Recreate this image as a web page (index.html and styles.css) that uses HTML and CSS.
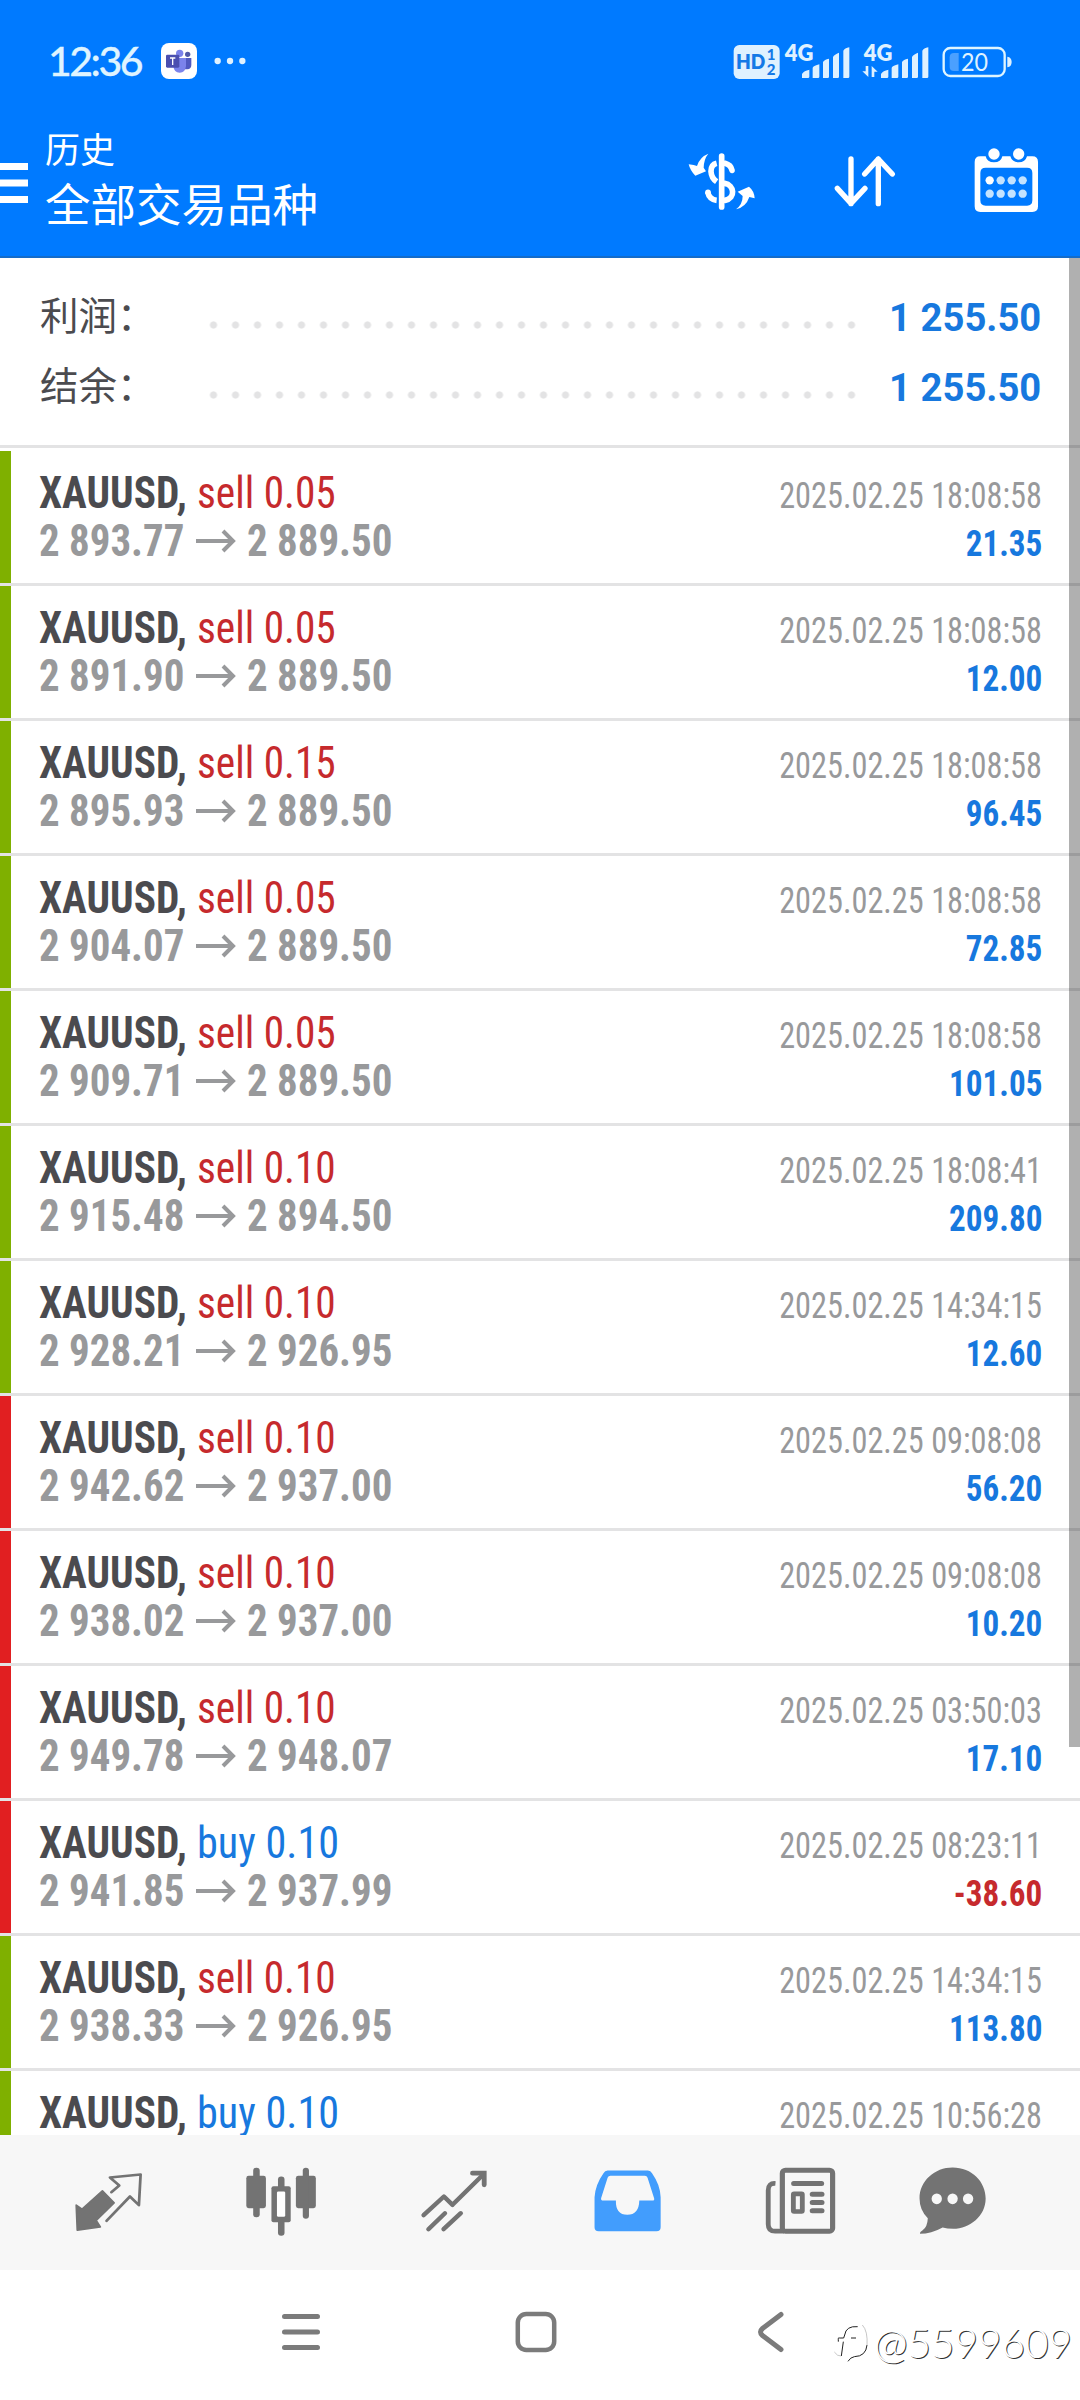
FILE: index.html
```html
<!DOCTYPE html>
<html lang="zh-CN">
<head>
<meta charset="utf-8">
<title>历史</title>
<link rel="stylesheet" href="styles.css">
</head>
<body>
<div class="screen">
  <header class="header">
    <div class="status">
      <span class="clock">12:36</span>
      <svg class="teams" viewBox="483 129 108 108" width="36" height="36">
        <rect x="483" y="129" width="108" height="108" rx="24" fill="#fff"/>
        <circle cx="563" cy="163" r="8" fill="#5059a8"/>
        <path d="M550 174h24v20q0 13-12 14h-12z" fill="#5059c0"/>
        <circle cx="539" cy="160" r="11" fill="#7b83eb"/>
        <path d="M520 174h38v24q-2 20-19 20t-19-20z" fill="#7b83eb"/>
        <rect x="498" y="164" width="40" height="39" rx="4" fill="#4b4fb0"/>
        <path d="M510 174h16M518 174v21" stroke="#fff" stroke-width="4"/>
      </svg>
      <svg class="more" viewBox="643 171 98 24" width="32.7" height="8">
        <g fill="#e0f2ff"><circle cx="654" cy="183" r="9.5"/><circle cx="691" cy="183" r="9.5"/><circle cx="728" cy="183" r="9.5"/></g>
      </svg>
      <svg class="signals" viewBox="220 120 840 120" width="280" height="40">
        <g fill="#dff1ff">
          <rect x="222" y="132" width="138" height="102" rx="17"/>
          <g class="bars">
            <path id="bars" d="M427 231v-12q6-10 22-13v21q0 4-4 4zM459 231v-31q4-6 20-10v37q0 4-4 4zM490 231v-48q4-7 18-10v54q0 4-4 4zM520 231v-63q4-8 18-13v72q0 4-4 4zM551 231v-82q4-7 18-10v88q0 4-4 4z"/>
            <use href="#bars" x="237"/>
          </g>
          <path d="M618 195h8v33l-18-17h10zM636 228v-33l18 17h-10v16z"/>
          <path d="M1043 167q13 2 13 16t-13 16z"/>
        </g>
        <rect x="852" y="141" width="183" height="84" rx="20" fill="none" stroke="#dff5ff" stroke-width="7"/>
        <path d="M897 156v54h-14q-13 0-13-13v-28q0-13 13-13z" fill="#4ba0ff"/>
        <text class="st-hd" x="229" y="204" textLength="88" lengthAdjust="spacingAndGlyphs">HD</text>
        <text class="st-num" x="321" y="178">1</text>
        <text class="st-num" x="321" y="221">2</text>
        <text class="st-net" x="375" y="179" textLength="86" lengthAdjust="spacingAndGlyphs">4G</text>
        <text class="st-net" x="612" y="179" textLength="86" lengthAdjust="spacingAndGlyphs">4G</text>
        <text class="st-bat" x="904" y="209" textLength="81" lengthAdjust="spacingAndGlyphs">20</text>
      </svg>
    </div>
    <div class="appbar">
      <svg class="burger" viewBox="0 0 28 42" width="28" height="42">
        <path d="M0 4.500h28M0 21h28M0 37.500h28" stroke="#fff" stroke-width="7"/>
      </svg>
      <div class="titles">
        <div class="title-small">历史</div>
        <div class="title-main">全部交易品种</div>
      </div>
      <svg class="act-money" viewBox="85 440 210 200" width="70" height="66.7">
        <path d="M146 460Q133 475 132 502L139 513 107 526Q92 512 87 492L102 494 112 497Q120 470 146 460z" fill="#fff"/>
        <path d="M229 627Q249 612 249 587L234 574 268 559Q284 572 285 594L269 590Q259 620 229 627z" fill="#fff"/>
        <path d="M186 467v153" stroke="#fff" stroke-width="17" stroke-linecap="round"/>
        <path d="M196 489Q214 494 217 510M195 549C224 553 229 594 196 600" fill="none" stroke="#fff" stroke-width="17" stroke-linecap="round"/>
        <path d="M171 489Q154 493 154 513Q155 533 171 544M144 575Q149 598 171 600" fill="none" stroke="#fff" stroke-width="17"/>
        <circle cx="145" cy="576" r="8.500" fill="#fff"/>
      </svg>
      <svg class="act-sort" viewBox="520 440 190 200" width="63.3" height="66.7">
        <path d="M574 476V610M533 564L574 609 616 564M656 610V476M615 521L656 476 698 521" fill="none" stroke="#fff" stroke-width="16" stroke-linecap="round" stroke-linejoin="round"/>
      </svg>
      <svg class="act-cal" viewBox="940 440 200 200" width="66.7" height="66.7">
        <path fill="#fff" fill-rule="evenodd" d="M962 468H978Q982 486 1003 486T1028 468H1052Q1057 486 1077 486T1102 468H1118Q1135 468 1135 485V618Q1135 635 1118 635H962Q945 635 945 618V485Q945 468 962 468zM978 502Q962 502 962 518V600Q962 616 978 616H1102Q1118 616 1118 600V518Q1118 502 1102 502z"/>
        <circle cx="1003" cy="461" r="17" fill="#fff"/><circle cx="1077" cy="461" r="17" fill="#fff"/>
        <circle cx="990" cy="540" r="12.500" fill="#fff"/>
        <g fill="#c4e3ff"><circle cx="1023" cy="540" r="12.500"/><circle cx="1056" cy="540" r="12.500"/><circle cx="1089" cy="540" r="12.500"/><circle cx="990" cy="580" r="12.500"/><circle cx="1023" cy="580" r="12.500"/><circle cx="1056" cy="580" r="12.500"/><circle cx="1089" cy="580" r="12.500"/></g>
      </svg>
    </div>
  </header>

  <main class="content">
    <section class="summary">
      <div class="sum-row"><span class="sum-label">利润：</span><span class="dots"></span><span class="sum-value">1 255.50</span></div>
      <div class="sum-row"><span class="sum-label">结余：</span><span class="dots"></span><span class="sum-value">1 255.50</span></div>
    </section>
    <ul class="deals">
      <li class="deal win first"><div class="line"><span class="symbol">XAUUSD,</span><span class="sell">sell 0.05</span><time class="time">2025.02.25 18:08:58</time></div><div class="line"><span class="price">2 893.77</span><svg class="arrow" viewBox="0 0 40 22"><path d="M0 11h36M27 1l10 10-10 10"/></svg><span class="price">2 889.50</span><span class="profit">21.35</span></div></li>
      <li class="deal win"><div class="line"><span class="symbol">XAUUSD,</span><span class="sell">sell 0.05</span><time class="time">2025.02.25 18:08:58</time></div><div class="line"><span class="price">2 891.90</span><svg class="arrow" viewBox="0 0 40 22"><path d="M0 11h36M27 1l10 10-10 10"/></svg><span class="price">2 889.50</span><span class="profit">12.00</span></div></li>
      <li class="deal win"><div class="line"><span class="symbol">XAUUSD,</span><span class="sell">sell 0.15</span><time class="time">2025.02.25 18:08:58</time></div><div class="line"><span class="price">2 895.93</span><svg class="arrow" viewBox="0 0 40 22"><path d="M0 11h36M27 1l10 10-10 10"/></svg><span class="price">2 889.50</span><span class="profit">96.45</span></div></li>
      <li class="deal win"><div class="line"><span class="symbol">XAUUSD,</span><span class="sell">sell 0.05</span><time class="time">2025.02.25 18:08:58</time></div><div class="line"><span class="price">2 904.07</span><svg class="arrow" viewBox="0 0 40 22"><path d="M0 11h36M27 1l10 10-10 10"/></svg><span class="price">2 889.50</span><span class="profit">72.85</span></div></li>
      <li class="deal win"><div class="line"><span class="symbol">XAUUSD,</span><span class="sell">sell 0.05</span><time class="time">2025.02.25 18:08:58</time></div><div class="line"><span class="price">2 909.71</span><svg class="arrow" viewBox="0 0 40 22"><path d="M0 11h36M27 1l10 10-10 10"/></svg><span class="price">2 889.50</span><span class="profit">101.05</span></div></li>
      <li class="deal win"><div class="line"><span class="symbol">XAUUSD,</span><span class="sell">sell 0.10</span><time class="time">2025.02.25 18:08:41</time></div><div class="line"><span class="price">2 915.48</span><svg class="arrow" viewBox="0 0 40 22"><path d="M0 11h36M27 1l10 10-10 10"/></svg><span class="price">2 894.50</span><span class="profit">209.80</span></div></li>
      <li class="deal win"><div class="line"><span class="symbol">XAUUSD,</span><span class="sell">sell 0.10</span><time class="time">2025.02.25 14:34:15</time></div><div class="line"><span class="price">2 928.21</span><svg class="arrow" viewBox="0 0 40 22"><path d="M0 11h36M27 1l10 10-10 10"/></svg><span class="price">2 926.95</span><span class="profit">12.60</span></div></li>
      <li class="deal loss"><div class="line"><span class="symbol">XAUUSD,</span><span class="sell">sell 0.10</span><time class="time">2025.02.25 09:08:08</time></div><div class="line"><span class="price">2 942.62</span><svg class="arrow" viewBox="0 0 40 22"><path d="M0 11h36M27 1l10 10-10 10"/></svg><span class="price">2 937.00</span><span class="profit">56.20</span></div></li>
      <li class="deal loss"><div class="line"><span class="symbol">XAUUSD,</span><span class="sell">sell 0.10</span><time class="time">2025.02.25 09:08:08</time></div><div class="line"><span class="price">2 938.02</span><svg class="arrow" viewBox="0 0 40 22"><path d="M0 11h36M27 1l10 10-10 10"/></svg><span class="price">2 937.00</span><span class="profit">10.20</span></div></li>
      <li class="deal loss"><div class="line"><span class="symbol">XAUUSD,</span><span class="sell">sell 0.10</span><time class="time">2025.02.25 03:50:03</time></div><div class="line"><span class="price">2 949.78</span><svg class="arrow" viewBox="0 0 40 22"><path d="M0 11h36M27 1l10 10-10 10"/></svg><span class="price">2 948.07</span><span class="profit">17.10</span></div></li>
      <li class="deal loss"><div class="line"><span class="symbol">XAUUSD,</span><span class="buy">buy 0.10</span><time class="time">2025.02.25 08:23:11</time></div><div class="line"><span class="price">2 941.85</span><svg class="arrow" viewBox="0 0 40 22"><path d="M0 11h36M27 1l10 10-10 10"/></svg><span class="price">2 937.99</span><span class="profit negative">-38.60</span></div></li>
      <li class="deal win"><div class="line"><span class="symbol">XAUUSD,</span><span class="sell">sell 0.10</span><time class="time">2025.02.25 14:34:15</time></div><div class="line"><span class="price">2 938.33</span><svg class="arrow" viewBox="0 0 40 22"><path d="M0 11h36M27 1l10 10-10 10"/></svg><span class="price">2 926.95</span><span class="profit">113.80</span></div></li>
      <li class="deal win"><div class="line"><span class="symbol">XAUUSD,</span><span class="buy">buy 0.10</span><time class="time">2025.02.25 10:56:28</time></div></li>
    </ul>
    <div class="scrollbar"></div>
  </main>

  <nav class="tabs">
    <svg class="tab" viewBox="200 312.5 230 230" preserveAspectRatio="none">
      <path d="M297 393L331 429 279 482 291 501 224 511 221 436 238 448z" fill="#737373" stroke="#737373" stroke-width="5" stroke-linejoin="round"/>
      <path d="M323 397L346 377 319 353 408 344 403 436 377 410 309 483" fill="none" stroke="#737373" stroke-width="8" stroke-linejoin="round" stroke-linecap="round"/>
    </svg>
    <svg class="tab" viewBox="702.5 312.5 230 230" preserveAspectRatio="none">
      <g fill="#737373"><rect x="715" y="348" width="57" height="97" rx="7"/><rect x="735" y="324" width="19" height="148" rx="9"/><rect x="859" y="348" width="58" height="97" rx="7"/><rect x="879" y="324" width="18" height="153" rx="9"/><rect x="807" y="350" width="19" height="178" rx="9"/><rect x="788" y="379" width="56" height="108" rx="6"/></g>
      <rect x="804" y="395" width="24" height="76" rx="4" fill="#fff"/>
    </svg>
    <svg class="tab" viewBox="1205 312.5 230 230" preserveAspectRatio="none">
      <path d="M1230 466L1289 410 1314 435 1404 343M1244 508L1292 460M1288 508L1338 460" fill="none" stroke="#737373" stroke-width="13" stroke-linecap="round" stroke-linejoin="round"/>
      <path d="M1372 340H1406V375" fill="none" stroke="#737373" stroke-width="14" stroke-linecap="round"/>
    </svg>
    <svg class="tab" viewBox="139 312.5 230 230" preserveAspectRatio="none">
      <path fill="#429dfd" fill-rule="evenodd" d="M196 332H313Q321 332 325 340Q349 375 350 412V502Q350 514 338 514H170Q158 514 158 502V412Q160 375 184 340Q188 332 196 332zM204 348Q198 348 196 354L177 415Q176 422 183 422H220Q219 465 253 465T288 422H326Q333 422 331 415L312 354Q310 348 304 348z"/>
    </svg>
    <svg class="tab" viewBox="643 312.5 230 230" preserveAspectRatio="none">
      <rect x="705" y="331" width="146" height="183" rx="9" fill="none" stroke="#737373" stroke-width="15"/>
      <path d="M685 371Q664 369 664 391V493Q664 514 684 514H710" fill="none" stroke="#737373" stroke-width="14"/>
      <path d="M738 371H819M792 403.500H820M792 428H820M792 453H820" stroke="#737373" stroke-width="15" stroke-linecap="round"/>
      <rect x="737" y="402" width="26" height="53" rx="2" fill="none" stroke="#737373" stroke-width="14"/>
    </svg>
    <svg class="tab last" viewBox="1084 312.5 230 230" preserveAspectRatio="none">
      <path d="M1199 323C1255 323 1295 366 1295 416C1295 469 1249 506 1201 507Q1183 507 1170 503Q1137 522 1104 522Q1103 516 1112 511Q1126 501 1127 475Q1103 451 1103 416C1103 363 1147 323 1199 323z" fill="#737373"/>
      <g fill="#f7f7f7"><ellipse cx="1153" cy="417" rx="15" ry="16"/><ellipse cx="1199" cy="417" rx="15" ry="16"/><ellipse cx="1244" cy="417" rx="15" ry="16"/></g>
    </svg>
  </nav>

  <footer class="sysnav">
    <div class="sys"><svg viewBox="0 0 42 42" width="42" height="42"><path d="M4.500 5.500h33M4.500 21h33M4.500 36.500h33" stroke="#7b7b7b" stroke-width="5" stroke-linecap="round"/></svg></div>
    <div class="sys"><svg viewBox="0 0 42 42" width="42" height="42"><rect x="2.800" y="3" width="36.400" height="36" rx="8.500" fill="none" stroke="#7b7b7b" stroke-width="4.500"/></svg></div>
    <div class="sys"><svg viewBox="0 0 42 42" width="42" height="42"><path d="M31 3.500L12.500 17.500Q8.500 21 12.500 24.500L31 38.500" fill="none" stroke="#7b7b7b" stroke-width="5" stroke-linecap="round"/></svg></div>
    <div class="watermark">
      <svg viewBox="39 45 108 129" width="36" height="43"><path d="M113 59Q78 56 74 84L71 93H55V104M70 104L64 147M93 93H108M84 163Q91 151 103 149Q138 148 141 114" fill="none" stroke="#222" stroke-width="3"/><path d="M127 54Q144 72 141 116M43 135Q52 148 63 147M52 99L61 92" fill="none" stroke="#aaa" stroke-width="2"/></svg>
      <span>@5599609</span>
    </div>
  </footer>
</div>
</body>
</html>
```
FILE: styles.css
```css
* { box-sizing: border-box; }
body { margin: 0; background: #fff; }
svg { display: block; flex: none; overflow: visible; }

.screen {
  width: 1080px;
  height: 2400px;
  display: flex;
  flex-direction: column;
  overflow: hidden;
  background: #fff;
  font-family: "Roboto Condensed", Roboto, "Noto Sans CJK SC", sans-serif;
}

/* header */
.header {
  height: 258px;
  flex: none;
  background: #007aff;
  border-bottom: 2px solid #146cca;
}
.status { height: 122px; display: flex; align-items: center; padding-left: 48px; }
.clock {
  width: 113px;
  font: 500 41px/48px Lato, sans-serif;
  color: #dff4ff;
  letter-spacing: -2.500px;
  -webkit-text-stroke: 0.3px #dff4ff;
}
.more { margin-left: 17px; }
.signals { margin-left: 486px; }
.signals text { fill: #dff1ff; font-family: Lato, sans-serif; }
.signals .st-hd { fill: #1479e6; font-size: 60px; font-weight: 800; }
.signals .st-num { fill: #1479e6; font-size: 45px; font-weight: 900; }
.signals .st-net { font-size: 66px; font-weight: 800; }
.signals .st-bat { font-size: 75px; }

.appbar { height: 134px; display: flex; align-items: flex-start; }
.burger { margin-top: 40px; }
.titles { width: 657px; padding-left: 17px; color: #fff; font-family: "Noto Sans CJK SC", sans-serif; }
.title-small { font-size: 35px; line-height: 52px; }
.title-main { font-size: 45.500px; line-height: 57px; }
.act-money { margin: 24.5px 0 0 3px; }
.act-sort { margin: 24.5px 0 0 75px; }
.act-cal { margin: 24.5px 0 0 77px; }

/* summary */
.content { position: relative; height: 1877px; flex: none; overflow: hidden; }
.summary { height: 190px; padding: 24px 39px 0 40px; border-bottom: 3px solid #e3e3e4; }
.sum-row { height: 70px; display: flex; align-items: center; }
.sum-label {
  width: 169px;
  font: 400 38.500px/63px "Noto Sans CJK SC", sans-serif;
  padding-bottom: 7px;
  color: #4b4b4f;
}
.dots {
  width: 660px;
  height: 8px;
  margin-top: 15px;
  background: radial-gradient(circle, #e3e3e4 3.200px, transparent 4px) -6.500px 0 / 22px 8px;
}
.sum-value {
  margin-left: auto;
  padding-top: 2px;
  font: 700 39px/68px Roboto, sans-serif;
  color: #1778de;
  transform: scaleX(0.98);
  transform-origin: right;
}

/* deal list */
.deals { list-style: none; margin: 0; padding: 0; }
.deal {
  height: 135px;
  padding: 21px 38px 0 28px;
  border-left: 11px solid #7fb000;
  position: relative;
}
.deal::before {
  content: "";
  position: absolute;
  left: -11px;
  right: 0;
  top: 0;
  height: 3px;
  background: #e3e3e4;
}
.first::before { background: #fff; }
.loss { border-left-color: #e11f21; }
.line { height: 48px; display: flex; align-items: baseline; font-size: 43.500px; line-height: 48px; font-stretch: 75%; white-space: pre; }
.symbol { width: 158px; font-weight: 700; color: #4b4b4f; }
.symbol, .sell, .buy { transform: translateY(0.5px) scaleX(0.95); transform-origin: left; }
.sell { color: #c62a2d; }
.buy { color: #1778de; transform: translateY(0.5px) scaleX(0.97); }
.time, .profit { margin-left: auto; font-size: 36px; transform: translateY(0.5px) scaleX(0.897); transform-origin: right; }
.time { color: #98999b; }
.price { width: 146px; font-weight: 700; color: #98999b; transform: translateY(0.5px) scaleX(0.94); transform-origin: left; }
.arrow { width: 40px; height: 22px; margin: 0 11px; align-self: center; }
.arrow path { fill: none; stroke: #98999b; stroke-width: 4; }
.profit { font-weight: 700; color: #1778de; transform: translateY(0.5px) scaleX(0.92); }
.negative { color: #c62a2d; }

.scrollbar {
  position: absolute;
  top: 0;
  right: 0;
  width: 11px;
  height: 1489px;
  background: rgba(0, 0, 0, 0.31);
}

/* bottom tabs */
.tabs { height: 135px; flex: none; display: flex; align-items: center; padding-left: 69px; gap: 93.800px; background: #f7f7f7; }
.tab { width: 79.200px; height: 76.700px; }
.last { margin-left: -21px; }

/* system navigation */
.sysnav { position: relative; flex: 1; display: flex; padding-left: 183.500px; }
.sys { width: 235px; height: 124px; display: flex; align-items: center; justify-content: center; }
.watermark {
  position: absolute;
  left: 833px;
  top: 47px;
  display: flex;
  align-items: center;
  gap: 5px;
  font: 300 40.500px/52px Lato, sans-serif;
  color: #fff;
  text-shadow: 1px 1px 0 #333;
}
```
